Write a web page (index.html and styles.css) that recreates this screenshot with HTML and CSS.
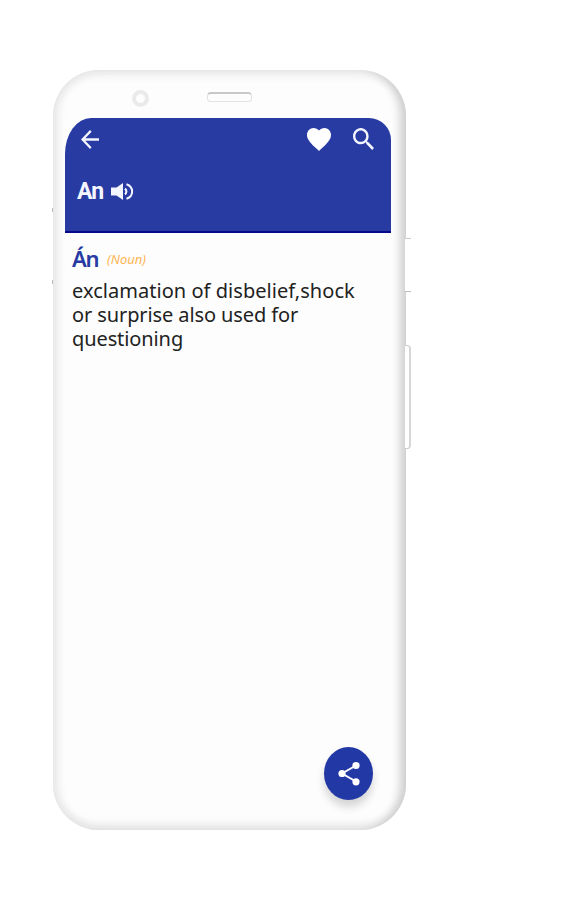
FILE: index.html
```
<!DOCTYPE html>
<html lang="en">
  <head>
    <meta charset="UTF-8" />
    <meta name="viewport" content="width=device-width, initial-scale=1" />
    <title>An</title>
    <link rel="stylesheet" href="styles.css">
  </head>

  <body>
    <div class="phone">
      <span class="side-button power"></span>
      <span class="side-button volume"></span>
      <span class="edge-mark mark-one"></span>
      <span class="edge-mark mark-two"></span>

      <div class="top-bezel">
        <span class="camera"></span>
        <span class="speaker"></span>
      </div>

      <div class="screen">
        <header>
          <nav class="toolbar">
            <svg class="back" viewBox="4 4 16 16" preserveAspectRatio="none"><path d="M20 11H7.83l5.59-5.59L12 4l-8 8 8 8 1.41-1.41L7.83 13H20v-2z"/></svg>
            <svg class="heart" viewBox="2 3 20 18.35" preserveAspectRatio="none"><path d="M12 21.35l-1.45-1.32C5.4 15.36 2 12.28 2 8.5 2 5.42 4.42 3 7.5 3c1.74 0 3.41.81 4.5 2.09C13.09 3.81 14.76 3 16.5 3 19.58 3 22 5.42 22 8.5c0 3.78-3.4 6.86-8.55 11.54L12 21.35z"/></svg>
            <svg class="search" viewBox="3 3 17.5 17.5" preserveAspectRatio="none"><path d="M15.5 14h-.79l-.28-.27C15.41 12.59 16 11.11 16 9.5 16 5.91 13.09 3 9.5 3S3 5.91 3 9.5 5.91 16 9.5 16c1.61 0 3.09-.59 4.23-1.57l.27.28v.79l5 4.99L20.49 19l-4.99-5zm-6 0C7.01 14 5 11.99 5 9.5S7.01 5 9.5 5 14 7.01 14 9.5 11.99 14 9.5 14z"/></svg>
          </nav>
          <div class="word">
            <span class="word-text">An</span>
            <svg class="sound" viewBox="0 0 23 19">
              <path d="M0 5.500h5.500L12 1v17l-6.500-4.500H0z"/>
              <path class="wave" d="M14 6.500q2.800 3 0 6M15.500 2.200c7.500 2.600 7.500 12 0 14.600"/>
            </svg>
          </div>
        </header>

        <main>
          <div class="entry">
            <span class="headword">Án</span>
            <span class="type">(Noun)</span>
          </div>
          <p>
            <span class="line first">exclamation of disbelief,shock</span>
            <span class="line second">or surprise also used for</span>
            <span class="line third">questioning</span>
          </p>
        </main>

        <div class="share">
          <svg viewBox="0 0 22 25">
            <path class="link" d="M18 4.500L4 12.500l14 8"/>
            <circle cx="18" cy="4.500" r="3.600"/>
            <circle cx="4" cy="12.500" r="3.600"/>
            <circle cx="18" cy="20.800" r="3.600"/>
          </svg>
        </div>
      </div>
    </div>
  </body>
</html>
```
FILE: styles.css
```
* {
  box-sizing: border-box;
}

body {
  margin: 0;
  padding: 70px 0 0 53px;
  height: 900px;
  background: #fff;
  font-family: "Noto Sans", sans-serif;
}

.phone {
  position: relative;
  width: 353px;
  height: 760px;
  padding: 0 15px 20px 12px;
  border-radius: 46px;
  background: #fdfdfd;
  box-shadow: inset -12px 0 9px -6px #cfcfcf, inset 9px 0 8px -4px #e8e8e8,
    inset 0 12px 9px -7px #e8e8e8, inset 0 -10px 8px -5px #e2e2e2,
    inset 0 0 2px #d8d8d8;
}

.side-button {
  position: absolute;
  left: 352px;
  width: 6px;
  background: #fff;
}

.power {
  top: 168px;
  height: 54px;
  border-top: 1px solid #ccc;
  border-bottom: 1px solid #bbb;
}

.volume {
  top: 275px;
  height: 104px;
  border: 1px solid #ccc;
  border-right: 2px solid #d6d6d6;
  border-left: 0;
  border-radius: 0 4px 4px 0;
}

.edge-mark {
  position: absolute;
  left: -1px;
  width: 1px;
  height: 4px;
  background: #bbb;
}

.mark-one {
  top: 138px;
}

.mark-two {
  top: 210px;
}

.top-bezel {
  display: flex;
  align-items: flex-start;
  height: 48px;
  padding: 20px 0 0 67px;
}

.camera {
  width: 17px;
  height: 17px;
  border: 4px solid #eaeaea;
  border-radius: 50%;
}

.speaker {
  width: 45px;
  height: 10px;
  margin: 2px 0 0 58px;
  border: 1px solid #e2e2e2;
  border-top: 2px solid #c8c8c8;
  border-radius: 4px;
}

.screen {
  display: flex;
  flex-direction: column;
  height: 692px;
}

header {
  height: 115px;
  padding: 10px 17px 0 16px;
  border-bottom: 2px solid #07078c;
  border-radius: 26px 22px 0 0 / 36px 22px 0 0;
  background: #273ba3;
}

svg {
  display: block;
  fill: #f4f6ff;
}

.toolbar {
  display: flex;
  height: 24px;
}

.back {
  width: 18px;
  height: 19px;
  margin: 2px auto 0 0;
}

.heart {
  width: 24px;
  height: 23px;
  margin-right: 22px;
  fill: #fff;
}

.search {
  width: 21px;
  height: 22px;
}

.word {
  display: flex;
  align-items: center;
  height: 30px;
  margin: 24px 0 0 -4px;
}

.word-text {
  width: 34px;
  padding-top: 1px;
  color: #f4f6ff;
  font: bold 23px/30px Roboto, sans-serif;
  letter-spacing: -0.8px;
}

.sound {
  width: 23px;
  height: 19px;
}

.wave {
  fill: none;
  stroke: #f4f6ff;
  stroke-width: 2;
}

main {
  flex: 1;
  padding: 11px 0 0 7px;
}

.entry {
  display: flex;
  align-items: center;
  height: 30px;
}

.headword {
  width: 35px;
  color: #273ba3;
  font-size: 22px;
  font-weight: 600;
  line-height: 28px;
  letter-spacing: -1.4px;
  padding-bottom: 2px;
}

.type {
  padding-bottom: 1px;
  color: #ffb554;
  font-size: 13px;
  font-style: italic;
}

p {
  margin: 5px 0 0;
  color: #222;
  font-size: 20px;
  line-height: 24px;
}

.line {
  display: block;
  white-space: nowrap;
}

.first {
  letter-spacing: 0.04px;
}

.second {
  letter-spacing: -0.1px;
}

.third {
  letter-spacing: -0.1px;
}

.share {
  display: flex;
  align-items: center;
  justify-content: center;
  align-self: flex-end;
  width: 49px;
  height: 53px;
  margin: 0 18px 10px 0;
  border-radius: 50%;
  background: #2238a4;
  box-shadow: 0 7px 8px rgba(0, 0, 0, 0.16);
}

.share svg {
  width: 22px;
  height: 25px;
  fill: #fff;
}

.link {
  fill: none;
  stroke: #fff;
  stroke-width: 2;
}
```
